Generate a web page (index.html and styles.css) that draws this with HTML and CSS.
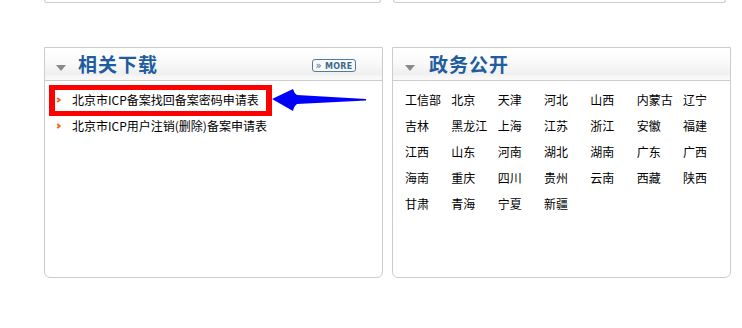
FILE: index.html
```html
<!DOCTYPE html>
<html lang="zh-CN">

<head>
  <meta charset="UTF-8">
  <title>相关下载 - 政务公开</title>
  <link rel="stylesheet" href="styles.css">
</head>

<body>
  <!-- bottoms of the boxes above -->
  <div class="top-row">
    <div class="stub stub-left"></div>
    <div class="stub stub-right"></div>
  </div>

  <div class="panel-row">
    <div class="panel">
      <div class="panel-head">
        <span class="tri"></span>
        <h2>相关下载</h2>
        <a class="more" href="#"><span class="more-arr">&raquo;</span> MORE</a>
      </div>
      <ul class="downloads">
        <li><a href="#">北京市ICP备案找回备案密码申请表</a></li>
        <li><a href="#">北京市ICP用户注销(删除)备案申请表</a></li>
      </ul>
      <!-- annotation over the first link -->
      <div class="mark-box"></div>
      <svg class="mark-arrow" width="100" height="26" viewBox="0 0 100 26">
        <path d="M0,11 L21,1 Q22,5 25,7 L94,11 L94,12.5 L25,16 Q22,18 21,23 Z" fill="#0000ff" />
      </svg>
    </div>

    <div class="panel">
      <div class="panel-head">
        <span class="tri tri-r"></span>
        <h2>政务公开</h2>
      </div>
      <div class="regions">
        <a href="#">工信部</a><a href="#">北京</a><a href="#">天津</a><a href="#">河北</a><a href="#">山西</a><a href="#">内蒙古</a><a href="#">辽宁</a>
        <a href="#">吉林</a><a href="#">黑龙江</a><a href="#">上海</a><a href="#">江苏</a><a href="#">浙江</a><a href="#">安徽</a><a href="#">福建</a>
        <a href="#">江西</a><a href="#">山东</a><a href="#">河南</a><a href="#">湖北</a><a href="#">湖南</a><a href="#">广东</a><a href="#">广西</a>
        <a href="#">海南</a><a href="#">重庆</a><a href="#">四川</a><a href="#">贵州</a><a href="#">云南</a><a href="#">西藏</a><a href="#">陕西</a>
        <a href="#">甘肃</a><a href="#">青海</a><a href="#">宁夏</a><a href="#">新疆</a>
      </div>
    </div>
  </div>
</body>

</html>
```

FILE: styles.css
```css
body {
  margin: 0;
  background-color: #fff;
  font-family: "Noto Sans CJK SC", "Liberation Sans", sans-serif;
  font-size: 12px;
  color: #000;
}

a {
  color: #000;
  text-decoration: none;
}

.top-row {
  display: flex;
  padding-left: 44px;
}

.stub {
  height: 2px;
  border: 1px solid #ccc;
  border-top: none;
  border-radius: 0 0 4px 4px;
}

.stub-left {
  width: 335px;
}

.stub-right {
  width: 331px;
  margin-left: 12px;
}

.panel-row {
  display: flex;
  gap: 9px;
  margin-top: 44px;
  padding-left: 44px;
}

.panel {
  position: relative;
  width: 337px;
  height: 229px;
  border: 1px solid #ccc;
  border-radius: 0 0 6px 6px;
}

.panel-head {
  display: flex;
  align-items: center;
  height: 32px;
  padding-left: 11px;
  border-bottom: 1px solid #ccc;
  background: linear-gradient(#fff 0%, #fafafa 45%, #efefef 82%, #f6f6f6 88%, #fafafa 100%);
}

.tri {
  width: 0;
  height: 0;
  margin-top: 7px;
  border-left: 5px solid transparent;
  border-right: 5px solid transparent;
  border-top: 6px solid #8a8a8a;
}

.tri-r {
  margin-left: 1px;
}

.panel-head h2 {
  margin: 0 0 0 12px;
  font-size: 19px;
  font-weight: bold;
  line-height: 32px;
  letter-spacing: 1px;
  color: #1f5d9f;
}

.tri-r + h2 {
  margin-left: 14px;
}

.more {
  margin-left: auto;
  margin-right: 26px;
  margin-top: 2px;
  width: 42px;
  height: 11px;
  border: 1px solid #4f7c9c;
  border-radius: 3px;
  background-color: #f7f9fa;
  font-family: "DejaVu Sans", sans-serif;
  font-size: 8px;
  font-weight: bold;
  line-height: 11px;
  letter-spacing: 0.3px;
  text-align: center;
  color: #3f6a8a;
}

.more-arr {
  font-size: 10px;
  font-weight: normal;
}

.downloads {
  list-style: none;
  margin: 0;
  padding: 6px 0 0 27px;
}

.downloads li {
  position: relative;
  height: 26px;
  line-height: 26px;
}

.downloads li::before {
  content: "";
  position: absolute;
  left: -16px;
  top: 11px;
  width: 2px;
  height: 2px;
  border-top: 2px solid #f26a1b;
  border-right: 2px solid #f26a1b;
  transform: rotate(45deg);
}

.mark-box {
  position: absolute;
  left: 4px;
  top: 37px;
  width: 211px;
  height: 21px;
  border: 5px solid #ff0000;
  border-left-width: 6px;
  border-right-width: 6px;
}

.mark-arrow {
  position: absolute;
  left: 227px;
  top: 40px;
}

.regions {
  display: grid;
  grid-template-columns: repeat(7, 46.33px);
  grid-auto-rows: 26px;
  padding: 6px 0 0 12px;
  line-height: 26px;
}

.regions a {
  white-space: nowrap;
}
```
